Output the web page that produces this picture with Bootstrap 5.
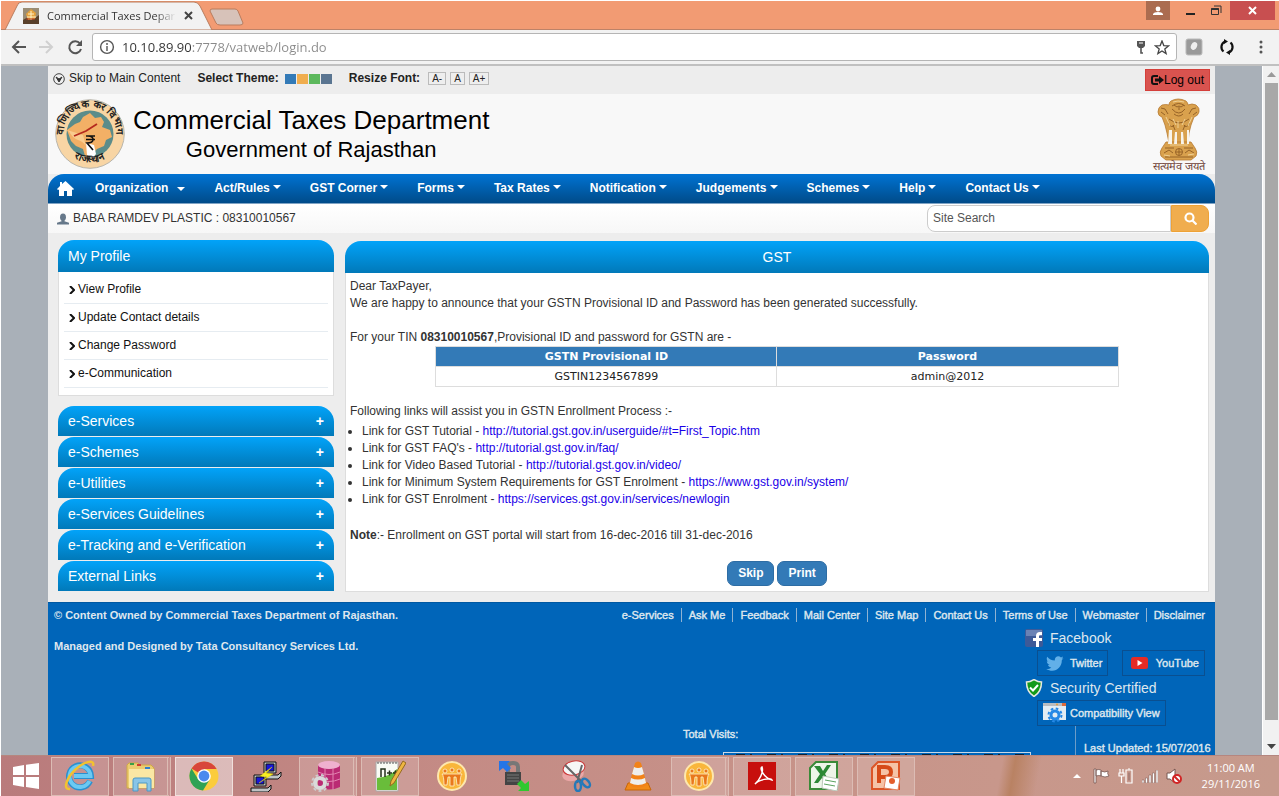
<!DOCTYPE html>
<html lang="en">
<head>
<meta charset="utf-8">
<meta name="viewport" content="width=device-width, initial-scale=1">
<title>Commercial Taxes Department</title>
<link href="https://cdn.jsdelivr.net/npm/bootstrap@5.3.0/dist/css/bootstrap.min.css" rel="stylesheet">
<style>
:root{--ui:"Open Sans","Noto Sans",sans-serif;--page:"Liberation Sans",Arial,sans-serif}
body{font:12px/17px var(--page);color:#333;height:100vh;overflow:hidden;background:#fff;padding:1px 0 0 1px}
a{text-decoration:none;color:inherit}
svg{display:block;flex:none}
button{font-family:inherit}
/* browser window */
.tabstrip{height:29px;background:#f29b73;font-family:var(--ui);border-bottom:1px solid #bd8268}
.tabstrip .tab-shape{position:absolute;inset:0}
.tab-item{position:relative;width:246px;height:29px}
.tab-label{position:relative;padding-left:22px;height:29px}
.tab-title{width:133px;font-size:11px;white-space:nowrap;overflow:hidden;color:#333;-webkit-mask-image:linear-gradient(90deg,#000 84%,transparent)}
.win-btn{border:0;background:none;padding:0;height:19px;display:flex;align-items:center;justify-content:center}
.toolbar{height:36px;background:#f2f2f2;border-bottom:2px solid #c0c0c0;padding:0 8px 0 10px}
.toolbar button{border:0;background:none;padding:0}
.address{height:28px;border:1px solid #b5b5b5;border-radius:3px;background:#fff;padding:0 6px}
.address input{border:0;outline:0;padding:0;margin-left:7px;font:13px/20px var(--ui);color:transparent;background:linear-gradient(90deg,#333 70px,#8a8a8a 70px);-webkit-background-clip:text;background-clip:text}
.view{background:#a9b0b8;min-height:0}
.site{margin:0 47px;background:#ededed;min-width:0}
.scroller{width:17px;background:#f1f1f1;border-left:1px solid #fff}
.scroller i{width:13px;background:#a8a8a8;flex:1}
.scroller svg{margin:6px 0}
/* site header */
.utility{height:28px;padding:0 5px 3px}
.utility,.utility a{color:#222}
.utility b{margin-left:17px}
.swatches{gap:1px;margin-left:6px}
.swatch{width:11px;height:10px;border:0;padding:0}
.fsize{border:1px solid #bbb;background:#eee;font-size:10px;line-height:11px;padding:0 3px;color:#222;height:13px;margin-left:4px}
.logout{background:#d9534f;border:1px solid #d43f3a;height:22px;padding:0 5px 0 4px;color:#000;margin-top:3px}
.masthead{height:80px;background:#f8f8f8;color:#000;padding:0 7px}
.masthead h1{font-size:26px;line-height:31px;margin:0;font-weight:400}
.masthead h2{font-size:22px;line-height:28px;margin:0;font-weight:400}
.mainmenu{height:30px;background:linear-gradient(#0073d3,#004b89);border-radius:16px 16px 0 0;border-bottom:1px solid #7fa3c4;font-weight:700}
.mainmenu a{color:#fff;padding:0 14px 0 15px;display:block}
.mainmenu .home{padding:0 6px 0 9px}
.mainmenu .wide span{margin-right:6px}
.mainmenu .dropdown-toggle::after{border-width:4px 4px 0}
.userbar{height:29px;background:linear-gradient(#fff,#f7f7f7);padding:0 6px 0 9px}
.search{width:282px;height:27px}
.search input{font-size:12px;border:1px solid #ccc;border-radius:8px 0 0 8px;padding:0 5px;color:#555;min-width:0}
.search input::placeholder{color:#555;opacity:1}
.search button{width:38px;background:#f0ad4e;border:1px solid #eea236;border-radius:0 8px 8px 0;padding:0 12px}
/* content */
.content{padding:7px 6px 10px 10px}
.sidebar{width:276px;flex:none}
.mainpanel{margin:1px 0 0 11px}
.bluehead{background:linear-gradient(#02a3f9,#0179b9);color:#fff;font-size:14px;line-height:20px;border:0;border-radius:16px 16px 0 0}
.sidebar .bluehead{height:30px;padding:0 10px;width:100%;text-align:left}
.sidebar .tall{height:32px}
.plist{background:#fff;border:1px solid #ddd;border-top:0;padding:4px 5px 7px;margin-bottom:10px}
.plist a{display:flex;align-items:center;height:28px;padding-left:5px;color:#111;border-bottom:1px solid #e6ecf1}
.plist svg{margin-right:3px}
.panelbox{background:#fff;border:1px solid #ddd;border-top:0;padding:5px 4px}
.panelbox p{margin:0}
.panelbox ul{margin:3px 0 19px;padding-left:12px}
.panelbox ul a{color:#1a00e8}
.idtable{width:80%;font-family:"DejaVu Sans",Verdana,sans-serif;font-size:11px;line-height:18px;color:#222;text-align:center;table-layout:fixed}
.idtable th,.idtable td{border:1px solid #ddd;padding:0;height:20px}
.idtable th{background:#337ab7;color:#fff}
.actions{margin-top:17px;gap:3px}
.actbtn{background:#337ab7;border:1px solid #2e6da4;border-radius:7px;color:#fff;font-weight:700;font-size:12px;line-height:17px;padding:3px 10px;height:25px}
/* footer */
.sitefoot{background:#0065b9;color:#dfe7ee;font-size:11px;border-top:1px solid #0058a2;overflow:hidden}
.semi{-webkit-text-stroke:.4px currentColor}
.owner b{display:block;margin:4px 0 14px 6px}
.fl{padding:5px 2px 0 0}
.fl a{padding:0 7px;line-height:14px;border-right:1px solid #8fb3d3}
.fl a:last-child{border:0;padding-right:8px}
.social{width:190px;padding-top:6px}
.social .title{font-size:14px;line-height:18px;height:20px}
.social .title svg{margin-right:7px}
.chips{margin:2px 10px 2px 12px}
.chips:last-child{margin-bottom:0}
.chip{height:26px;border:1px solid #0a4f90;padding:0 5px}
.visits{margin-right:44px}
.visitbox{width:308px;height:10px;margin:9px 0 0 40px;border:1px solid #c9d8e6}
.visitbox:before{content:"";display:block;width:288px;height:1px;margin:1px 0 0 12px;background:repeating-linear-gradient(90deg,#123 0 9px,transparent 9px 14px,#123 14px 16px,transparent 16px 31px)}
.updated{width:140px;border-left:1px solid #6c9cc8;padding:14px 0 0 8px;white-space:nowrap}
/* desktop taskbar */
.taskbar{height:41px;background:linear-gradient(100deg,transparent 78%,#b98263 79%,transparent 81%),linear-gradient(90deg,#b97b7c,#c48b85 35%,#c8978b 78%,#c69a8c);border-top:1px solid #b5867f;font-family:var(--ui);color:#fff;font-size:11px;line-height:16px}
.taskbar button{border:1px solid transparent;background:none;padding:0;width:58px;height:39px;display:flex;align-items:center;justify-content:center}
.taskbar .startbtn{width:46px;padding-left:3px}
.taskbar .open{border-color:#dcbcb4;background:rgba(255,255,255,.16)}
.taskbar .stack{border-right:4px double #dcbcb4}
.taskbar .active{background:rgba(255,255,255,.45);border-color:#f0e0dc}
.tray{margin-right:19px}
</style>
<script src="https://cdn.jsdelivr.net/npm/bootstrap@5.3.0/dist/js/bootstrap.bundle.min.js"></script>
</head>
<body class="d-flex flex-column">

<div class="tabstrip d-flex flex-shrink-0">
  <div class="tab-item">
    <svg class="tab-shape" width="246" height="29"><path d="M4 29 16 5Q17 1 21 1H193Q197 1 199 5L211 29Z" fill="#f2f2f2" stroke="#b97c5e"/><path d="M211 8H234Q236 8 237 10L242 22Q242 24 239 24H219Q216 24 215 22L209 10Q209 8 211 8Z" fill="#d7c2b9" stroke="#b97c5e"/></svg>
    <div class="tab-label d-flex align-items-center">
      <svg width="16" height="16"><path fill="#9a8c74" d="M0 0h16v16H0z"/><path d="M0 12 5 9l7 1 4-3v9H0z" fill="#59402a"/><path d="M3 6 8 1l5 4-1 6-7 1z" fill="#e5a23d"/><path d="M5 6h6M4 9h9M8 3v9" stroke="#fff0c5"/><path d="M3 11h9" stroke="#b43c25"/></svg>
      <span class="tab-title ms-1 ps-1">Commercial Taxes Depar</span>
      <svg class="ms-2" width="9" height="9"><path d="m1 1 7 7m0-7L1 8" stroke="#444" stroke-width="2"/></svg>
    </div>
  </div>
  <div class="ms-auto d-flex align-items-start pe-1">
    <button class="win-btn" style="width:24px;background:#ab6c50" aria-label="Profile"><svg width="10" height="10"><circle cx="5" cy="3" r="2.4" fill="#fff"/><path d="M0 9V8q1-2 5-2t5 2v1z" fill="#fff"/></svg></button>
    <button class="win-btn px-3" aria-label="Minimize"><svg width="9" height="9"><path d="M0 8h9" stroke="#222" stroke-width="2"/></svg></button>
    <button class="win-btn pe-2" aria-label="Restore"><svg width="11" height="11" fill="none" stroke="#333"><path d="M.5 3.5h7v6h-7z"/><path d="M.5 4h7" stroke-width="2"/><path d="M3 1h7v7"/></svg></button>
    <button class="win-btn" style="width:45px;background:#c84f50" aria-label="Close"><svg width="9" height="9"><path d="m1 1 7 7m0-7L1 8" stroke="#fff" stroke-width="2"/></svg></button>
  </div>
</div>

<div class="toolbar d-flex align-items-center flex-shrink-0">
  <button aria-label="Back"><svg width="16" height="14" fill="none" stroke="#555" stroke-width="2"><path d="M15 7H2M8 1 2 7l6 6"/></svg></button>
  <button class="ms-2 ps-1" aria-label="Forward"><svg width="16" height="14" fill="none" stroke="#d0d0d0" stroke-width="2"><path d="M0 7h13M7 1l6 6-6 6"/></svg></button>
  <button class="ms-2 ps-1" aria-label="Reload"><svg width="17" height="16" fill="none" stroke="#555" stroke-width="2"><path d="M13 4.5A6 6 0 1 0 14 10"/><path d="M15 1v6H9z" fill="#555" stroke="none"/></svg></button>
  <div class="address d-flex align-items-center flex-grow-1 ms-2">
    <svg width="16" height="16" fill="none" stroke="#555" stroke-width="1.4"><circle cx="8" cy="8" r="6.4"/><path d="M8 7v5M8 4v2"/></svg>
    <input class="flex-grow-1" type="text" value="10.10.89.90:7778/vatweb/login.do" aria-label="Address">
    <svg class="me-2" width="10" height="14"><path d="M1 1h8v5l-2 2H3L1 6z" fill="#555"/><path d="M3 3h4" stroke="#fff"/><path d="M5 7v6h2" stroke="#555" stroke-width="1.6" fill="none"/></svg>
    <svg width="16" height="15" fill="none" stroke="#444" stroke-width="1.3"><path d="m8 1 1.800 4.600 4.700.300-3.700 3 1.300 4.700L8 11l-4.100 2.600 1.300-4.700-3.700-3 4.700-.300z"/></svg>
  </div>
  <svg class="ms-2" width="18" height="18"><rect x="1" y="1" width="16" height="16" rx="2" fill="#999" stroke="#bbb"/><ellipse cx="9" cy="8" rx="3" ry="4" fill="#eee" transform="rotate(25 9 8)"/></svg>
  <svg class="ms-3" width="16" height="16" fill="none" stroke="#111" stroke-width="2.2"><path d="M6 2.500A6 6 0 0 0 4.500 12.500M10 13.500A6 6 0 0 0 11.500 3.500"/><path d="M5 0v5l4-2.500zM11 11v5l-4-2.500z" fill="#111" stroke="none"/></svg>
  <svg class="ms-4 me-2" width="4" height="14" fill="#555"><circle cx="2" cy="2" r="1.500"/><circle cx="2" cy="7" r="1.500"/><circle cx="2" cy="12" r="1.500"/></svg>
</div>

<div class="view d-flex flex-grow-1">
  <div class="site d-flex flex-column flex-grow-1">
    <div class="utility d-flex align-items-center flex-shrink-0">
      <svg class="me-1" width="12" height="12"><circle cx="6" cy="6" r="5.300" fill="#eee" stroke="#444"/><path d="m3 4 3 2 3-2-3 5z" fill="#333" stroke="#333"/></svg>
      <a href="#main">Skip to Main Content</a>
      <b>Select Theme:</b>
      <span class="swatches d-flex">
        <button class="swatch" style="background:#337ab7" aria-label="Blue theme"></button><button class="swatch" style="background:#f0ad4e" aria-label="Orange theme"></button><button class="swatch" style="background:#5cb85c" aria-label="Green theme"></button><button class="swatch" style="background:#5a7591" aria-label="Slate theme"></button>
      </span>
      <b class="me-1">Resize Font:</b>
      <button class="fsize">A-</button><button class="fsize">A</button><button class="fsize">A+</button>
      <button class="logout d-flex align-items-center ms-auto"><svg width="14" height="12" fill="none" stroke="#111" stroke-width="2"><path d="M8 2H4Q2 2 2 4v4q0 2 2 2h4"/><path d="M5 6h5" stroke-width="3"/><path d="M9 2v8l5-4z" fill="#111" stroke="none"/></svg>Log out</button>
    </div>

    <header class="masthead d-flex align-items-center flex-shrink-0">
      <svg width="70" height="70" viewBox="0 0 70 70">
        <circle cx="35" cy="35" r="34.300" fill="#f8d5a4" stroke="#b9b6ad"/>
        <circle cx="35" cy="35" r="23.500" fill="#5b8c8a"/>
        <path d="m12 31 8-6 5-2 3-5 7-4 5 5 6-1 3 5-2 5 8 3 2 7-6 3-2 6-7 3-5 5-3 5-4-3-2-7-7-3-5-5z" fill="#f3b066"/>
        <path d="M12 31c4 3 5 8 11 10s8 6 8 6l-3-11z" fill="#f9cc8e"/>
        <path d="m19 37 12-5 11-7" fill="none" stroke="#b5291e" stroke-width="1.800"/>
        <path d="m31 44 8 2 2 9-4 5-5-4z" fill="#fff"/>
        <path d="M31 37h9M31 40.500h9M33 37c7 0 7 7-1 7l6 7" fill="none" stroke="#111" stroke-width="1.600"/>
        <path id="arcTop" d="M9.500 42A26.500 26.500 0 1 1 60.500 42" fill="none"/>
        <path id="arcBot" d="M14 55.500A32 32 0 0 0 56 55.500" fill="none"/>
        <g font-size="10" font-weight="700" fill="#222" text-anchor="middle"><text><textPath href="#arcTop" startOffset="50%">वाणिज्यिक कर विभाग</textPath></text><text><textPath href="#arcBot" startOffset="50%">राजस्थान</textPath></text></g>
      </svg>
      <div class="ms-2 text-center"><h1>Commercial Taxes Department</h1><h2>Government of Rajasthan</h2></div>
      <svg class="ms-auto" width="56" height="76" viewBox="0 0 56 76">
        <g transform="translate(-1 3)">
        <g fill="#d9a14d" stroke="#b67a32" stroke-width=".800">
          <path d="M20 2q7-4 15 0 2 2 2 4 4-2 8 0 4 3 3 7-1 4-5 5l-3 8-2 8-1 10H18l-2-10-2-8-3-8q-4-1-4-5 0-5 4-7 4-1 7 0 0-3 2-4z"/>
          <path d="M15 43h25l4 6q3 4 1 8l-5 4H15l-5-4q-2-4 1-8z"/>
        </g>
        <g fill="#f8f4ea"><path d="M18 31h3v14h-4zM24 33h2v12h-3zM30 33h2l1 12h-3zM36 31h2v14h-2z"/></g>
        <g fill="none" stroke="#8f5b22" stroke-width=".900">
          <path d="M21 7q7-5 13 0M21 10q7 8 13 0M23 15q5 4 9 0M23 6l3 2 2-1M33 6l-3 2-2-1M28 8v3M10 9l4 1 3 5M45 9l-4 1-3 5M10 13l4 3M46 13l-4 3M18 20q10 8 20 0M17 24q4 6 6 2M39 24q-4 6-6 2M22 26l2 5M34 26l-2 5"/>
          <circle cx="28" cy="53" r="3.500"/><path d="M28 50v6M25 53h6M13 54l5-3 4 3M34 54l4-3 5 3M14 49h9M33 49h9M14 58h28"/>
        </g>
        <g fill="none" stroke="#f3d79e" stroke-width=".900"><path d="M15 18l4 9M41 18l-4 9M22 20l3 6M34 20l-3 6M27 22v7M13 56l6 1M37 56l6-1M22 3l5-1 6 1M19 46h18"/></g>
        </g>
        <text x="27" y="74" font-size="11" fill="#6e3f35" text-anchor="middle">सत्यमेव जयते</text>
      </svg>
    </header>

    <nav class="mainmenu d-flex align-items-center flex-shrink-0">
      <a class="home" href="#" aria-label="Home"><svg width="17" height="15" viewBox="0 0 17 15" fill="#fff"><path d="M8.500 0 17 8l-1 1-1-.500V15h-5v-5H7v5H2V8.500L1 9 0 8l3-3V1h2v2z"/></svg></a>
      <a class="dropdown-toggle wide d-flex align-items-center" href="#"><span>Organization</span></a>
      <a class="dropdown-toggle" href="#">Act/Rules</a>
      <a class="dropdown-toggle" href="#">GST Corner</a>
      <a class="dropdown-toggle" href="#">Forms</a>
      <a class="dropdown-toggle" href="#">Tax Rates</a>
      <a class="dropdown-toggle" href="#">Notification</a>
      <a class="dropdown-toggle" href="#">Judgements</a>
      <a class="dropdown-toggle" href="#">Schemes</a>
      <a class="dropdown-toggle" href="#">Help</a>
      <a class="dropdown-toggle" href="#">Contact Us</a>
    </nav>

    <div class="userbar d-flex align-items-center flex-shrink-0">
      <svg width="12" height="12" viewBox="0 0 13 12" fill="#66788a"><ellipse cx="6.500" cy="4" rx="3.200" ry="4"/><path d="M5 7h3v1.500l5 1.500v2H0v-2l5-1.500z"/></svg>
      <span class="ms-1">BABA RAMDEV PLASTIC : 08310010567</span>
      <form class="search d-flex ms-auto"><input class="flex-grow-1" type="text" placeholder="Site Search" aria-label="Site Search"><button type="button" aria-label="Search"><svg width="13" height="13" fill="none" stroke="#fff" stroke-width="2.200"><circle cx="5.500" cy="5.500" r="4"/><path d="m8.500 8.500 4 4"/></svg></button></form>
    </div>

    <main id="main" class="content d-flex align-items-start flex-shrink-0">
      <aside class="sidebar">
        <h3 class="bluehead tall d-flex align-items-center m-0">My Profile</h3>
        <div class="plist">
          <a href="#"><svg width="6" height="8"><path d="m1 0 4 4-4 4" fill="none" stroke="#111" stroke-width="2"/></svg>View Profile</a>
          <a href="#"><svg width="6" height="8"><path d="m1 0 4 4-4 4" fill="none" stroke="#111" stroke-width="2"/></svg>Update Contact details</a>
          <a href="#"><svg width="6" height="8"><path d="m1 0 4 4-4 4" fill="none" stroke="#111" stroke-width="2"/></svg>Change Password</a>
          <a href="#"><svg width="6" height="8"><path d="m1 0 4 4-4 4" fill="none" stroke="#111" stroke-width="2"/></svg>e-Communication</a>
        </div>
        <div class="vstack" style="gap:1px">
          <button class="bluehead d-flex align-items-center justify-content-between">e-Services<b>+</b></button>
          <button class="bluehead d-flex align-items-center justify-content-between">e-Schemes<b>+</b></button>
          <button class="bluehead d-flex align-items-center justify-content-between">e-Utilities<b>+</b></button>
          <button class="bluehead d-flex align-items-center justify-content-between">e-Services Guidelines<b>+</b></button>
          <button class="bluehead d-flex align-items-center justify-content-between">e-Tracking and e-Verification<b>+</b></button>
          <button class="bluehead d-flex align-items-center justify-content-between">External Links<b>+</b></button>
        </div>
      </aside>
      <section class="mainpanel flex-grow-1">
        <h3 class="bluehead text-center m-0" style="padding:6px">GST</h3>
        <div class="panelbox">
          <p>Dear TaxPayer,<br>We are happy to announce that your GSTN Provisional ID and Password has been generated successfully.<br><br>For your TIN <b>08310010567</b>,Provisional ID and password for GSTN are -</p>
          <table class="idtable mx-auto mb-3">
            <thead><tr><th scope="col">GSTN Provisional ID</th><th scope="col">Password</th></tr></thead>
            <tbody><tr><td>GSTIN1234567899</td><td>admin@2012</td></tr></tbody>
          </table>
          <p>Following links will assist you in GSTN Enrollment Process :-</p>
          <ul>
            <li>Link for GST Tutorial - <a href="#">http://tutorial.gst.gov.in/userguide/#t=First_Topic.htm</a></li>
            <li>Link for GST FAQ's - <a href="#">http://tutorial.gst.gov.in/faq/</a></li>
            <li>Link for Video Based Tutorial - <a href="#">http://tutorial.gst.gov.in/video/</a></li>
            <li>Link for Minimum System Requirements for GST Enrolment - <a href="#">https://www.gst.gov.in/system/</a></li>
            <li>Link for GST Enrolment - <a href="#">https://services.gst.gov.in/services/newlogin</a></li>
          </ul>
          <p><b>Note</b>:- Enrollment on GST portal will start from 16-dec-2016 till 31-dec-2016</p>
          <div class="actions d-flex justify-content-center"><button class="actbtn">Skip</button><button class="actbtn">Print</button></div>
        </div>
      </section>
    </main>

    <footer class="sitefoot d-flex flex-column flex-grow-1">
      <div class="d-flex">
        <div class="owner"><b>© Content Owned by Commercial Taxes Department of Rajasthan.</b><b>Managed and Designed by Tata Consultancy Services Ltd.</b></div>
        <div class="ms-auto">
          <nav class="fl semi d-flex"><a href="#">e-Services</a><a href="#">Ask Me</a><a href="#">Feedback</a><a href="#">Mail Center</a><a href="#">Site Map</a><a href="#">Contact Us</a><a href="#">Terms of Use</a><a href="#">Webmaster</a><a href="#">Disclaimer</a></nav>
          <div class="social ms-auto">
            <a class="title d-flex align-items-center" href="#"><svg width="18" height="18"><rect width="18" height="18" rx="2" fill="#3d5a98"/><path d="M1 1h16v6H1z" fill="#6a82b5"/><path d="M17 3h-2q-4 0-4 4v2H8v3h3v6h3v-6h3V9h-3V7q0-1 1.500-1H17z" fill="#fff"/></svg>Facebook</a>
            <div class="chips semi d-flex justify-content-between">
              <a class="chip d-flex align-items-center ps-2" href="#"><svg class="me-1" width="20" height="15" viewBox="0 0 20 15" fill="#62b0e8"><path d="M17.500 2q-1 .500-1.800.600Q17 1.500 17 .600l-2 .800C12.500-1 8.500.500 8.800 4.500 5.500 4.400 3 2.800 1.200.700.300 2.600.700 4.500 2.400 5.700L.800 5.200C.900 7 2 8.300 3.600 8.800L2 8.900c.500 1.400 1.800 2.400 3.300 2.500C3.800 12.600 2 13.100.200 12.900 8 17.500 16 12.500 15.800 4.200z"/></svg>Twitter</a>
              <a class="chip d-flex align-items-center ps-2" href="#"><svg class="me-2" width="17" height="12"><rect width="17" height="12" rx="2.500" fill="#e62b25"/><path d="M6.500 3v6l5-3z" fill="#fff"/></svg>YouTube</a>
            </div>
            <a class="title d-flex align-items-center" href="#"><svg width="18" height="18" viewBox="0 0 18 18"><path d="M9 .500Q13 3 16.500 3 16.500 13 9 17.500 1.500 13 1.500 3 5 3 9 .500Z" fill="#149a1a" stroke="#e9e9e0" stroke-width="1.500"/><path d="m5 8.500 3 3L13 6" fill="none" stroke="#fff" stroke-width="2"/></svg>Security Certified</a>
            <div class="chips semi d-flex"><a class="chip d-flex align-items-center" href="#"><svg class="me-1" width="23" height="20"><path d="M0 0h23v17H0z" fill="#e3edf3"/><path d="M0 0h23v3H0z" fill="#b9bcc0"/><circle cx="14" cy="1.500" r="1" fill="#e79b33"/><path d="M19 0h4v3h-4z" fill="#dd6b3b"/><circle cx="12" cy="12" r="4" fill="none" stroke="#2689e6" stroke-width="3"/><circle cx="12" cy="12" r="6.500" fill="none" stroke="#2689e6" stroke-width="2" stroke-dasharray="2.600 2.500"/></svg>Compatibility View</a></div>
          </div>
        </div>
      </div>
      <div class="semi d-flex justify-content-end">
        <div class="visits">Total Visits:<div class="visitbox"></div></div>
        <div class="updated">Last Updated: 15/07/2016</div>
      </div>
    </footer>
  </div>
  <div class="scroller d-flex flex-column align-items-center flex-shrink-0">
    <svg width="9" height="5"><path d="M0 5h9L4.500 0z" fill="#999"/></svg><i></i><svg class="mt-4" width="9" height="5"><path d="M0 0h9L4.500 5z" fill="#444"/></svg>
  </div>
</div>

<div class="taskbar d-flex align-items-center gap-1 flex-shrink-0">
  <button class="startbtn" aria-label="Start"><svg width="28" height="26" fill="#fff"><path d="m1 4 11-2v10H1zM14 1.700 27 0v12H14zM1 14h11v10L1 22zM14 14h13v12l-13-2z"/></svg></button>
  <button class="open" aria-label="Internet Explorer"><svg width="32" height="32" viewBox="0 0 32 32" fill="none"><path d="M26 21A11 11 0 1 1 27 16H10" stroke="#2a90cf" stroke-width="6"/><path d="M25.500 21A10.500 10.500 0 1 1 26.500 16H10" stroke="#6cc9f2" stroke-width="4"/><path d="M6 29C-2 30 3 17 12 9S31-1 29 6" stroke="#f2c230" stroke-width="2.500"/></svg></button>
  <button class="open stack" aria-label="File Explorer"><svg width="32" height="32"><path d="M2 5 4 3h9l2 2h11l3 3v20H2z" fill="#eccb70" stroke="#cfa945"/><path d="M4 9h25v19H4z" fill="#fae7a4"/><path d="M5 4h4" stroke="#38a047" stroke-width="2"/><path d="M12 5h4" stroke="#d23c31" stroke-width="2"/><path d="M20 8h5" stroke="#337ecb" stroke-width="2"/><path d="M8 31V20q0-2 2-2h14q2 0 2 2v11h-4v-8h-9v8z" fill="#88c5e8" stroke="#4c98c4"/></svg></button>
  <button class="active" aria-label="Chrome"><svg width="30" height="30" viewBox="0 0 30 30"><circle cx="15" cy="15" r="14.500" fill="#fbcc3c"/><path d="M15 15 2.500 7.500A14.500 14.500 0 0 1 27.600 8H15z" fill="#d8453a"/><path d="M2.500 7.500A14.500 14.500 0 0 0 14 29.500L21 18l-6 3-6-3z" fill="#30a254"/><circle cx="15" cy="15" r="6.800" fill="#fff"/><circle cx="15" cy="15" r="5.400" fill="#4a89ee"/></svg></button>
  <button aria-label="PuTTY"><svg width="32" height="32" stroke="#111"><path d="M14 2h12v11H14zM11 15h17l3-3v4l-3 3H11zM4 15h12v11H4zM1 28h17l3-3v4l-3 3H1z" fill="#bfc3c5"/><path d="M16 4h8v7h-8zM6 17h8v7H6z" fill="#1817d8"/><path d="m22 7-12 9 7 1-8 6 14-9-7-1z" fill="#f6ee24" stroke="#d8c80a" stroke-width=".500"/></svg></button>
  <button class="open stack" aria-label="Database"><svg width="32" height="32"><path d="M7 5v22q11 5 22 0V5z" fill="#ba2a73"/><ellipse cx="18" cy="5" rx="11" ry="4" fill="#efb1cf"/><path d="M7 12q11 5 22 0M7 19q11 5 22 0M14 8v22M22 8v22" fill="none" stroke="#e385b2"/><circle cx="9" cy="23" r="5" fill="none" stroke="#dadada" stroke-width="4"/><circle cx="9" cy="23" r="8" fill="none" stroke="#ccc" stroke-width="2" stroke-dasharray="3 2.500"/></svg></button>
  <button class="open" aria-label="Notepad++"><svg width="32" height="32"><path d="M2 2h22v29H2z" fill="#f9fbf5" stroke="#aaa"/><path d="M3 18q12-1 20-9v21H3z" fill="#69bd3a"/><path d="M3 3h20" stroke="#555" stroke-dasharray="2 1"/><path d="M7 17V9h4v8M13 13h5m-2.500-2.500v5M19 13h5m-2.500-2.500v5" fill="none" stroke="#25321c" stroke-width="1.500"/><path d="m29 1 3 2-12 20-4 3 1-5z" fill="#eeb640" stroke="#946a20"/></svg></button>
  <button aria-label="Meetings"><svg width="30" height="30"><circle cx="15" cy="15" r="14" fill="#f9b63b" stroke="#fde7ad" stroke-width="2"/><g fill="#e9781c" stroke="#fff2ce" stroke-width=".800"><circle cx="8" cy="10" r="2"/><circle cx="15" cy="9" r="2"/><circle cx="22" cy="10" r="2"/><path d="M5 13h20q-2 2-2 11h-3l-1-8h-2v9h-4v-9h-2l-1 8H7q0-9-2-11z"/></g></svg></button>
  <button aria-label="Secure transfer"><svg width="32" height="32"><path d="M10 14V7q0-4 5-4t5 4v7" fill="none" stroke="#777" stroke-width="4"/><path d="M7 12h16v13H7z" fill="#444"/><path d="M9 15h12M9 18h12M9 21h12" stroke="#777"/><path d="M1 1h11L9 4l4 4-4 4-4-4-4 3z" fill="#2575e7"/><path d="M31 31H20l3-3-4-4 4-4 4 4 4-3z" fill="#2fc82f"/></svg></button>
  <button aria-label="Snipping Tool"><svg width="32" height="32" fill="none"><ellipse cx="13" cy="14" rx="11" ry="7" fill="#eba6a6" transform="rotate(-12 13 14)"/><ellipse cx="14" cy="8" rx="11" ry="7" fill="#f6f6f6" stroke="#cb3737" transform="rotate(-12 14 8)"/><path d="m5 5 17 17M22 5l-5 18" stroke="#666" stroke-width="2"/><ellipse cx="18" cy="26" rx="3" ry="5" stroke="#2579b9" stroke-width="2.500"/><ellipse cx="26" cy="23" rx="3" ry="5" stroke="#2579b9" stroke-width="2.500" transform="rotate(-40 26 23)"/></svg></button>
  <button aria-label="VLC"><svg width="28" height="32"><path d="M4 23h20l3 7H1z" fill="#f28a19" stroke="#c66609"/><path d="M11 3q3-3 6 0l6 22q-9 5-18 0z" fill="#f28218"/><path d="m10 7-2 7q6 3 12 0l-2-7q-4 2-8 0zM7 18l-1 5q8 4 16 0l-1-5q-7 3-14 0z" fill="#eee"/></svg></button>
  <button class="open stack" aria-label="Meetings window"><svg width="30" height="30"><circle cx="15" cy="15" r="14" fill="#f9b63b" stroke="#fde7ad" stroke-width="2"/><g fill="#e9781c" stroke="#fff2ce" stroke-width=".800"><circle cx="8" cy="10" r="2"/><circle cx="15" cy="9" r="2"/><circle cx="22" cy="10" r="2"/><path d="M5 13h20q-2 2-2 11h-3l-1-8h-2v9h-4v-9h-2l-1 8H7q0-9-2-11z"/></g></svg></button>
  <button class="open" aria-label="PDF Reader"><svg width="28" height="28"><path d="M0 0h28v28H0z" fill="#c70f0d"/><path d="M7 22c4-3 9-12 7-17-3 1 2 11 10 13-1-3-14 0-17 4z" fill="none" stroke="#fff" stroke-width="1.500"/></svg></button>
  <button class="open" aria-label="Excel"><svg width="30" height="30"><path d="M1 7 7 1h21v27H1z" fill="#eef5e9" stroke="#3a8a38" stroke-width="2"/><path d="m5 5 6 0 3 5 4-6h4l-6 9 6 9h-6l-3-5-4 5H5l6-9z" fill="#2c8835"/><path d="m14 15 16 3-2 12-15-3z" fill="#fff" stroke="#bcc9bb"/><path d="m16 19 11 2m-12 2 11 2" stroke="#5ba460"/></svg></button>
  <button class="open" aria-label="PowerPoint"><svg width="30" height="30"><path d="M1 7 7 1h21v27H1z" fill="#f5c3a7" stroke="#dc5527" stroke-width="2"/><path d="M8 22V6h6q6 0 6 5t-6 5h-5" fill="none" stroke="#d64a18" stroke-width="4"/><path d="m15 15 14 2-2 12-14-2z" fill="#fff" stroke="#e38561"/><circle cx="21" cy="20" r="3" fill="#e45f2d"/></svg></button>
  <div class="tray ms-auto d-flex align-items-center gap-2">
    <svg class="me-1" width="8" height="4" fill="#fff"><path d="M0 4h8L4 0z"/></svg>
    <svg width="17" height="16" fill="#fff" stroke="#765650" stroke-width=".800"><path d="M1 1h2v14H1zM3 2q3-1 5 0v6q-2-1-5 0zM8 3q4 2 7 0-1 3 1 5-4 2-8 0z"/></svg>
    <svg width="16" height="16" fill="none" stroke="#fff" stroke-width="1.200"><path d="M8 2h6v13H8z"/><path d="M10 1h2M2 1v4M5 1v4M1 5h5v3H1zM3.500 8v7"/><path d="M10 4.500h2v8h-2z" fill="#a98078" stroke="none"/></svg>
    <svg width="16" height="13" fill="#fff" stroke="#765650" stroke-width=".500"><path d="M0 10h2v3H0zM3.500 8h2v5h-2zM7 5h2v8H7zM10.500 3h2v10h-2zM14 0h2v13h-2z"/></svg>
    <svg width="16" height="16"><path d="M1 5h3l5-4v14l-5-4H1z" fill="#fff" stroke="#765650"/><circle cx="11" cy="11" r="4" fill="#fff" stroke="#d12525" stroke-width="2"/><path d="m8 8 6 6" stroke="#d12525" stroke-width="2"/></svg>
    <div class="text-center ms-2 ps-1">11:00 AM<br>29/11/2016</div>
  </div>
</div>
</body>
</html>
